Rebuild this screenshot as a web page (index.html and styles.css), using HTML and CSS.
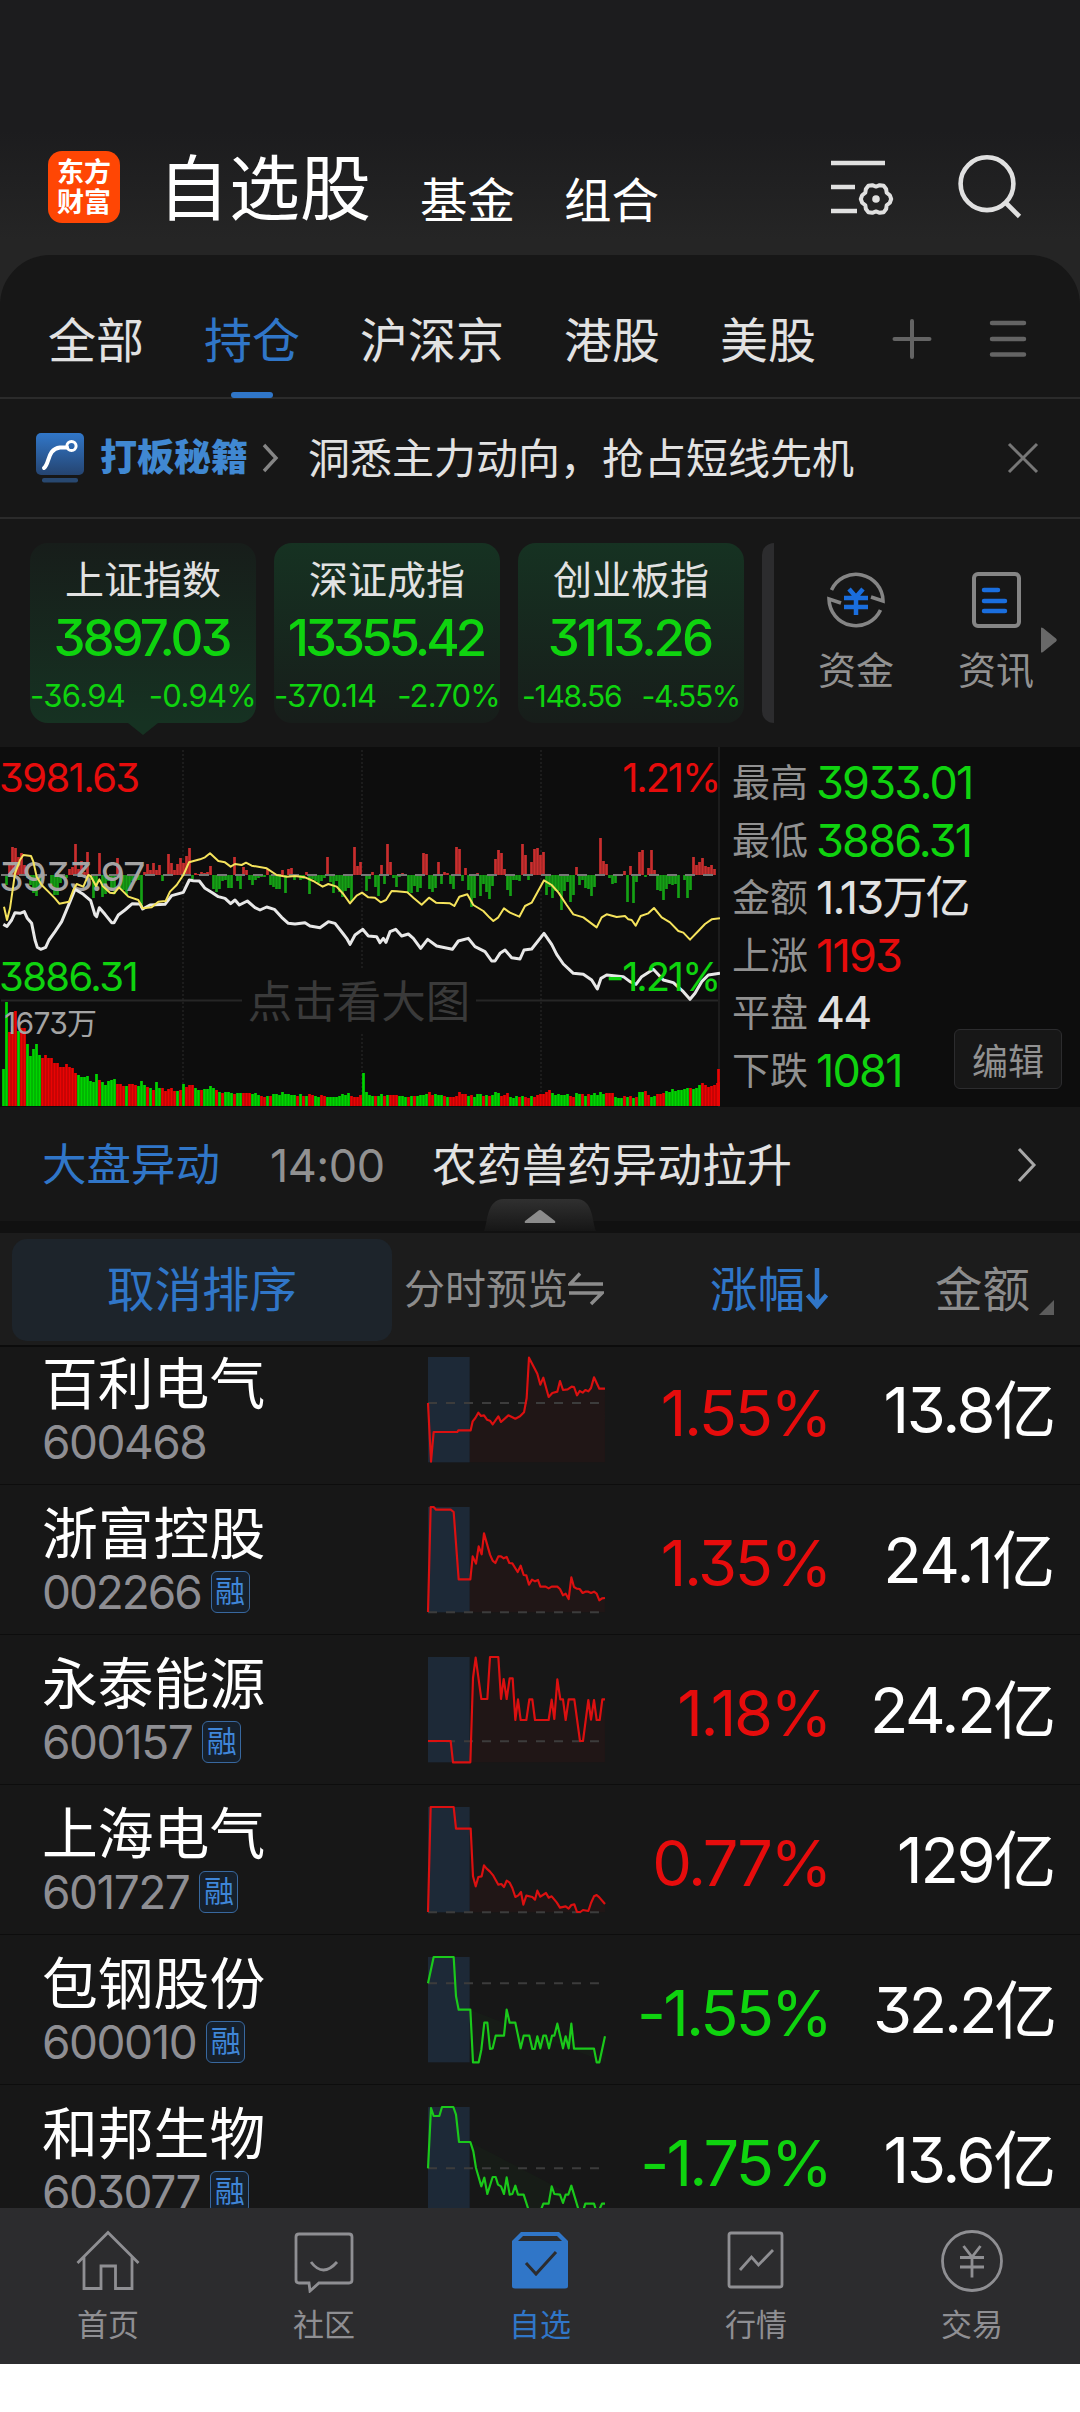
FILE: index.html
```html
<!DOCTYPE html>
<html lang="zh-CN">
<head>
<meta charset="utf-8">
<title>自选股</title>
<link rel="stylesheet" href="styles.css">
</head>
<body>
<div class="app">
  <header class="top">
    <div class="logo"><span>东方</span><span>财富</span></div>
    <h1 class="title">自选股</h1>
    <span class="top-link">基金</span>
    <span class="top-link">组合</span>
    <svg class="ic-settings" width="68" height="90" viewBox="0 0 68 90" fill="none" stroke="#e0e0e0" stroke-width="4.4"><path d="M3 23h54M3 47h24M3 71h26"/><path stroke-width="4" stroke-linejoin="round" d="M63.200 59L61.800 62.700 58.700 65.200 58.100 69.100 55.600 72.200 51.700 72.800 48 71.400 44.300 72.800 40.400 72.200 37.900 69.100 37.300 65.200 34.200 62.700 32.800 59 34.200 55.300 37.300 52.800 37.900 48.900 40.400 45.800 44.300 45.200 48 46.600 51.700 45.200 55.600 45.800 58.100 48.900 58.700 52.800 61.800 55.300Z"/><circle cx="48" cy="59" r="3.8" fill="#e0e0e0" stroke="none"/></svg>
    <svg class="ic-search" width="68" height="90" viewBox="0 0 68 90" fill="none" stroke="#e0e0e0" stroke-width="4.6"><circle cx="31" cy="43.7" r="26.4"/><path d="M50 63l13.5 13.5"/></svg>
  </header>

  <main class="panel">
    <nav class="tabs">
      <span class="tab">全部</span><span class="tab active">持仓</span><span class="tab">沪深京</span><span class="tab">港股</span><span class="tab">美股</span>
      <svg class="ic-plus" width="40" height="40" viewBox="0 0 40 40" stroke="#646464" stroke-width="4" stroke-linecap="round"><path d="M2.500 20h35M20 2v36"/></svg>
      <svg class="ic-menu" width="38" height="40" viewBox="0 0 38 40" stroke="#646464" stroke-width="4.500" stroke-linecap="round"><path d="M3 4h32M3 20h32M3 35.500h32"/></svg>
    </nav>

    <section class="banner">
      <svg width="50" height="52" viewBox="0 0 50 52"><defs><linearGradient id="bl" x2="0" y2="1"><stop stop-color="#3177c9"/><stop offset="1" stop-color="#254470"/></linearGradient></defs><rect x="1" y="1" width="48" height="42" rx="5" fill="url(#bl)"/><rect x="7" y="46" width="36" height="4.500" rx="2" fill="#284870"/><path d="M9 36C15 31 12 17 25 15.500h7" fill="none" stroke="#fff" stroke-width="4" stroke-linecap="round"/><circle cx="36.500" cy="14" r="4.600" fill="none" stroke="#fff" stroke-width="3"/></svg>
      <strong class="banner-tag">打板秘籍</strong>
      <svg class="banner-arrow" width="18" height="30" viewBox="0 0 18 30" fill="none" stroke="#858585" stroke-width="3.400"><path d="M3 2l12 13L3 28"/></svg>
      <span class="banner-text">洞悉主力动向，抢占短线先机</span>
      <svg class="banner-close" width="32" height="32" viewBox="0 0 32 32" fill="none" stroke="#777" stroke-width="3"><path d="M2 2l28 28M30 2L2 30"/></svg>
    </section>

    <section class="indices">
      <div class="card current"><span class="c-name">上证指数</span><span class="c-val">3897.03</span><div class="c-chg"><span>-36.94</span><span>-0.94%</span></div></div>
      <div class="card second"><span class="c-name">深证成指</span><span class="c-val">13355.42</span><div class="c-chg"><span>-370.14</span><span>-2.70%</span></div></div>
      <div class="card third"><span class="c-name">创业板指</span><span class="c-val">3113.26</span><div class="c-chg"><span>-148.56</span><span>-4.55%</span></div></div>
      <div class="sliver"></div>
      <div class="tool fund">
        <svg width="64" height="64" viewBox="0 0 64 64" fill="none" stroke="#858585" stroke-width="3.600"><path d="M7.500 22A27 27 0 0 1 59 33l-12-4M56.500 42A27 27 0 0 1 5 31l12 4"/><path stroke="#1a6ede" stroke-width="4.500" d="M25 21l7 8 7-8M20 30h24M20 39h24M32 29v18"/></svg>
        <span>资金</span>
      </div>
      <div class="tool news">
        <svg width="64" height="64" viewBox="0 0 64 64" fill="none"><rect x="10" y="6" width="45" height="52" rx="4" stroke="#858585" stroke-width="4"/><path stroke="#1a6ede" stroke-width="4.500" stroke-linecap="round" d="M20 22h14M20 33h21M20 43h21"/></svg>
        <span>资讯</span>
      </div>
      <svg class="more" width="16" height="26" viewBox="0 0 16 26"><path d="M0 1Q0 0 2 1L15 11.500Q16.500 13 15 14.500L2 25Q0 26 0 25Z" fill="#686868"/></svg>
    </section>

    <section class="market">
      <div class="chart">
        <svg width="720" height="360" viewBox="0 0 720 360">
          <g stroke="#222" stroke-width="1.500" stroke-dasharray="2 2"><path d="M183 3v356M362 3v356M541 3v356"/></g>
          <path d="M1 253.500h241M476 253.500h244" stroke="#262626" stroke-width="2"/>
          <path d="M719 0v360" stroke="#1c1c1c" stroke-width="2"/>
          <g id="flow"></g>
          <path d="M1 128h719" stroke="#777" stroke-width="2" stroke-dasharray="10 8"/>
          <g id="volume"></g>
        </svg>
        <div class="lab hi">3981.63</div><div class="lab hi-p">1.21%</div>
        <div class="lab mid">3933.97</div>
        <div class="lab lo">3886.31</div>
        <div class="lab vol">1673万</div>
        <div class="lab mark">点击看大图</div>
        <svg class="lines" width="720" height="360" viewBox="0 0 2160 1080" fill="none" stroke-linejoin="round"><g transform="translate(0 249)">
          <polyline stroke="#e8e8e8" stroke-width="9" points="10,283 21,289 35,270 45,248 60,250 73,245 82,265 95,280 105,330 112,352 122,358 137,352 147,330 165,305 185,275 210,215 225,178 250,193 272,212 285,255 290,260 298,233 315,253 335,278 342,278 355,255 375,240 397,221 420,222 428,237 450,225 495,223 515,197 550,187 568,150 580,152 598,153 615,175 637,188 655,200 675,205 692,221 705,210 718,225 742,213 765,233 780,240 800,231 823,238 845,262 865,280 885,282 915,278 930,288 960,293 985,275 1005,280 1030,312 1040,325 1050,343 1065,315 1088,298 1105,318 1130,320 1140,338 1150,325 1158,337 1170,305 1187,298 1205,318 1225,312 1240,325 1262,355 1283,328 1310,348 1357,358 1375,333 1405,325 1425,350 1455,365 1475,393 1485,393 1500,370 1515,360 1535,383 1560,387 1572,360 1595,357 1632,310 1655,343 1670,373 1690,402 1720,430 1750,433 1775,450 1792,477 1803,445 1820,435 1870,440 1890,455 1908,463 1925,440 1960,418 1990,450 2020,458 2050,485 2070,508 2085,490 2105,455 2125,435 2160,430"/>
          <polyline stroke="#f5e35c" stroke-width="6" points="12,230 21,270 30,235 45,130 60,90 70,75 93,78 100,95 110,140 125,165 145,185 165,205 178,221 207,215 220,180 230,162 250,170 265,135 272,138 288,168 298,148 308,168 330,188 342,190 357,172 370,185 385,200 415,210 428,235 455,232 475,215 497,213 510,185 530,165 550,135 567,97 600,88 615,82 630,70 655,93 675,97 692,110 705,102 725,105 738,98 755,107 800,115 830,135 860,140 885,138 915,142 940,153 968,170 985,162 1010,170 1030,192 1050,220 1070,197 1086,188 1105,202 1125,203 1142,217 1158,210 1175,183 1190,184 1222,187 1240,203 1265,224 1287,203 1308,218 1350,220 1363,228 1378,200 1402,193 1420,225 1450,243 1468,262 1480,273 1495,262 1512,235 1530,248 1558,260 1575,228 1595,218 1632,151 1655,165 1675,187 1700,225 1720,253 1750,262 1790,292 1805,262 1820,253 1850,261 1875,258 1885,268 1895,270 1907,287 1922,258 1945,250 1962,234 1985,262 2010,277 2035,303 2050,308 2070,329 2095,303 2115,282 2135,268 2160,265"/>
        </g></svg>
        <div class="lab lo-p">-1.21%</div>
      </div>
      <div class="stats">
        <dl>
          <div><dt>最高</dt><dd class="down">3933.01</dd></div>
          <div><dt>最低</dt><dd class="down">3886.31</dd></div>
          <div><dt>金额</dt><dd>1.13万亿</dd></div>
          <div><dt>上涨</dt><dd class="up">1193</dd></div>
          <div><dt>平盘</dt><dd>44</dd></div>
          <div><dt>下跌</dt><dd class="down">1081</dd></div>
        </dl>
        <button class="edit">编辑</button>
      </div>
    </section>

    <section class="alert">
      <span class="a-tag">大盘异动</span><span class="a-time">14:00</span><span class="a-text">农药兽药异动拉升</span>
      <svg class="a-arrow" width="20" height="36" viewBox="0 0 20 36" fill="none" stroke="#a8a8a8" stroke-width="3"><path d="M2 2l15 16L2 34"/></svg>
      <svg class="fold" width="112" height="32" viewBox="0 0 112 32"><defs><linearGradient id="fd" x2="0" y2="1"><stop stop-color="#303030"/><stop offset="1" stop-color="#161616"/></linearGradient></defs><path d="M0 32C4 24 2 0 20 0h72c18 0 16 24 20 32z" fill="url(#fd)"/><path d="M54 12q2-2 4 0l13 10q1 2-1 2H42q-2 0-1-2z" fill="#8c8c8c"/></svg>
    </section>
    <div class="gap"></div>

    <section class="cols">
      <span class="unsort">取消排序</span>
      <span class="col-preview">分时预览<svg width="36" height="34" viewBox="0 0 36 34" fill="none" stroke="#8c8c8c" stroke-width="3.400"><path d="M12 1.500L2 12h33M1 21h33L23 32"/></svg></span>
      <span class="col-rise">涨幅<svg width="24" height="42" viewBox="0 0 24 42" fill="none" stroke="#3076c8" stroke-width="4.500"><path d="M12 0v37M2.500 27L12 38l9.500-11"/></svg></span>
      <span class="col-amt">金额</span>
      <svg class="corner" width="16" height="16" viewBox="0 0 16 16"><path d="M15 0v15H0z" fill="#5c5c5c"/></svg>
    </section>

    <section class="list">
      <article class="row">
        <div class="who"><b>百利电气</b><p><span class="code">600468</span></p></div>
        <svg class="spark red" viewBox="84 52 531 316"><rect x="84" y="52" width="125" height="316"/><path class="fill" d="M209 368V272L218 245 226 235 235 219 243 229 252 227 261 240 270 243 278 254 295 230 303 247 325 227 346 237 360 230 372 218 380 175 387 54 412 102 421 135 430 114 446 172 457 160 472 156 480 124 489 151 520 141 531 167 539 154 565 155 573 145 582 113 598 147 615 147V368Z"/><path class="base" d="M84 190H615"/><polyline points="84,190 93,366 101,277 172,277 175,272 212,272 218,245 226,235 235,219 243,229 252,227 261,240 270,243 278,254 295,230 303,247 325,227 346,237 360,230 372,218 380,175 387,54 412,102 421,135 430,114 446,172 457,160 472,156 480,124 489,151 503,149 515,141 522,142 531,167 539,154 548,159 556,151 565,155 573,145 582,113 598,147 615,147"/></svg>
        <span class="pct up">1.55%</span><span class="amt wide">13.8亿</span>
      </article>
      <article class="row">
        <div class="who"><b>浙富控股</b><p><span class="code tight">002266</span><i>融</i></p></div>
        <svg class="spark red" viewBox="84 502 531 316"><rect x="84" y="502" width="125" height="316"/><path class="fill" d="M209 818V719L218 650 228 672 236 620 245 644 252 581 270 645 286 670 295 650 320 653 353 697 362 678 371 706 387 735 414 721 421 741 476 741 489 767 506 778 514 713 522 742 548 760 590 760 598 782 615 775V818Z"/><path class="base" d="M84 818H615"/><polyline points="84,817 92,502 101,502 108,510 152,510 161,517 176,719 211,719 218,650 228,672 236,620 245,644 252,581 270,645 278,663 286,670 295,650 303,650 311,656 320,652 328,670 337,671 353,697 362,678 371,706 379,707 387,735 396,720 405,725 414,721 421,741 437,741 446,746 455,741 472,741 480,748 489,767 497,762 506,778 514,713 522,742 530,747 539,748 548,760 556,756 565,756 573,760 582,756 590,762 598,782 606,776 615,775"/></svg>
        <span class="pct up">1.35%</span><span class="amt wider">24.1亿</span>
      </article>
      <article class="row">
        <div class="who"><b>永泰能源</b><p><span class="code">600157</span><i>融</i></p></div>
        <svg class="spark red" viewBox="84 952 531 316"><rect x="84" y="952" width="125" height="316"/><path class="fill" d="M211 1268L219 1015 227 954 244 1078 262 1078 270 952 295 952 303 1078 311 1018 320 1078 329 1016 338 1016 346 1141 354 1079 362 1141 379 1141 388 1079 397 1079 405 1141 446 1141 455 1080 463 1138 472 1019 481 1079 489 1079 497 1141 506 1079 523 1079 540 1204 549 1204 565 1081 573 1140 582 1081 590 1141 599 1141 607 1079 615 1079V1268Z"/><path class="base" d="M84 1205H615"/><polyline points="84,1204 152,1204 159,1268 211,1268 219,1015 227,954 244,1078 262,1078 270,952 295,952 303,1078 311,1018 320,1078 329,1016 338,1016 346,1141 354,1079 362,1141 379,1141 388,1079 397,1079 405,1141 446,1141 455,1080 463,1138 472,1019 481,1079 489,1079 497,1141 506,1079 523,1079 540,1204 549,1204 565,1081 573,1140 582,1081 590,1141 599,1141 607,1079 615,1079"/></svg>
        <span class="pct up">1.18%</span><span class="amt">24.2亿</span>
      </article>
      <article class="row">
        <div class="who"><b>上海电气</b><p><span class="code">601727</span><i>融</i></p></div>
        <svg class="spark red" viewBox="84 82 531 316"><rect x="84" y="82" width="125" height="316"/><path class="fill" d="M209 398V147L219 290 227 320 235 292 245 288 252 257 270 276 295 315 312 320 320 303 337 325 346 352 363 337 370 375 379 348 405 360 412 333 421 351 438 340 480 384 506 386 523 374 531 397 565 393 582 350 590 346 615 373V398Z"/><path class="base" d="M84 398H615"/><polyline points="84,397 92,82 161,82 168,147 212,147 219,290 227,320 235,292 245,290 252,257 260,267 270,276 280,288 295,315 304,313 312,322 320,303 329,309 337,325 346,352 355,347 363,337 370,375 379,348 397,352 405,360 412,333 421,351 438,340 446,354 455,350 470,368 480,384 497,380 506,387 514,376 523,374 531,397 541,397 549,391 565,394 573,370 582,350 590,346 598,353 615,373"/></svg>
        <span class="pct up">0.77%</span><span class="amt">129亿</span>
      </article>
      <article class="row">
        <div class="who"><b>包钢股份</b><p><span class="code">600010</span><i>融</i></p></div>
        <svg class="spark green" viewBox="84 532 531 316"><rect x="84" y="532" width="125" height="316"/><path class="fill" d="M211 690L219 848 236 848 244 805 253 729 262 729 270 808 278 805 287 768 312 768 320 690 329 729 346 729 362 805 371 768 388 768 397 808 446 805 472 732 489 805 514 732 522 807 582 807 590 848 598 848 615 770V848Z"/><path class="base" d="M84 611H615"/><polyline points="84,611 101,532 161,532 168,650 176,690 211,690 219,848 236,848 244,810 253,729 262,729 270,808 278,806 287,768 312,768 320,690 329,729 346,729 362,806 371,768 388,768 397,808 404,808 412,770 421,806 430,768 438,768 447,806 456,768 463,768 472,732 489,806 497,770 506,806 514,732 522,807 582,807 590,848 598,848 615,770"/></svg>
        <span class="pct down">-1.55%</span><span class="amt narrow">32.2亿</span>
      </article>
      <article class="row">
        <div class="who"><b>和邦生物</b><p><span class="code">603077</span><i>融</i></p></div>
        <svg class="spark green" viewBox="84 982 531 316"><rect x="84" y="982" width="125" height="316"/><path class="fill" d="M211 1087L228 1165 244 1220 253 1194 262 1243 280 1192 296 1215 312 1243 320 1193 329 1245 346 1218 354 1245 371 1245 388 1298 420 1298 430 1272 446 1272 455 1220 472 1245 489 1270 514 1218 538 1298 556 1272 615 1272V1298Z"/><path class="base" d="M84 1166H615"/><polyline points="84,1166 93,985 101,1009 118,1009 126,982 160,982 168,1005 177,1087 211,1087 220,1115 228,1165 244,1220 253,1194 262,1243 278,1192 287,1192 294,1215 303,1220 312,1243 320,1193 329,1245 337,1243 346,1218 354,1245 371,1245 388,1298 420,1298 430,1272 446,1272 455,1220 463,1243 480,1245 489,1270 497,1245 505,1245 514,1218 538,1298 548,1298 556,1272 582,1272 590,1298 598,1290 606,1272 615,1272"/></svg>
        <span class="pct down">-1.75%</span><span class="amt wide">13.6亿</span>
      </article>
    </section>
  </main>

  <nav class="bottom">
    <a><svg viewBox="0 0 64 64"><path d="M1.500 34L32 3.500 62.500 34M8 28v31.500h17V37h14.500v22.500H56V28"/></svg>首页</a>
    <a><svg viewBox="0 0 64 64"><path d="M7 5h50q3 0 3 3v43q0 3-3 3H27L18 62 17 54H7q-3 0-3-3V8q0-3 3-3zM19 33q12 16 26 0"/></svg>社区</a>
    <a class="on"><svg viewBox="0 0 64 64"><path class="solid" d="M13 3h38l9 9v45q0 2.500-3 2.500H7q-3 0-3-2.500V12z"/><path class="cut" d="M10 12l5-5h34l5 5z"/><path class="tick" d="M18 34l10 11 20-22"/></svg>自选</a>
    <a><svg viewBox="0 0 64 64"><path d="M7 4h49q2 0 2 2v50q0 2-2 2H7q-2 0-2-2V6q0-2 2-2zM16 41l11.500-13 7 8L49 21"/></svg>行情</a>
    <a><svg viewBox="0 0 64 64"><circle cx="32" cy="32" r="29.500"/><path d="M23.500 17L32 28l8.500-11M20 28.500h24M20 38h24M32 28v20.500"/></svg>交易</a>
  </nav>
</div>
<script src="chart.js"></script>
</body>
</html>
```
FILE: styles.css
```css
* { box-sizing: border-box; margin: 0; padding: 0; }
body {
  width: 1080px; height: 2412px; background: #fff; color: #e2e2e2; overflow: hidden;
  font-family: Inter, "Noto Sans CJK SC", sans-serif;
  font-feature-settings: "cv09" 1; white-space: nowrap; font-weight: 400;
}
svg { display: block; flex: none; }
.up { color: #e60c0c; }
.down { color: #0fd30f; }
.app { height: 2364px; background: linear-gradient(#1c1c1e 0, #1c1c1e 130px, #252525 240px); display: flex; flex-direction: column; overflow: hidden; }

.top { height: 255px; padding: 151px 0 0 48px; display: flex; align-items: flex-start; flex: none; }
.logo { width: 72px; height: 72px; border-radius: 14px; background: #ff4604; color: #fff; display: flex; flex-direction: column; align-items: center; padding-top: 5px; font: 700 27px/30px "Noto Sans CJK SC", sans-serif; }
.title { font-size: 71px; font-weight: 400; line-height: 74px; color: #fff; margin-left: 38px; width: 262px; }
.top-link { font-size: 47.500px; line-height: 99px; color: #fff; width: 144px; }
.ic-settings { margin: -11px 0 0 120px; }
.ic-search { margin: -11px 0 0 60px; }

.panel { background: #171717; border-radius: 50px 50px 0 0; height: 1953px; flex: none; overflow: hidden; }
.tabs { height: 144px; border-bottom: 2px solid #2b2b2b; display: flex; padding-left: 48px; align-items: flex-start; }
.tab { font-size: 48px; line-height: 72px; padding-top: 50px; height: 143px; margin-right: 60px; position: relative; }
.active { color: #3076c8; }
.active::after { content: ""; position: absolute; left: 50%; bottom: 0; width: 42px; height: 6px; margin-left: -21px; border-radius: 3px; background: #3076c8; }
.ic-plus { margin: 64px 0 0 16px; }
.ic-menu { margin: 64px 0 0 57px; }

.banner { height: 120px; border-bottom: 2px solid #2b2b2b; display: flex; align-items: center; padding-left: 35px; }
.banner-tag { font-size: 37px; font-weight: 900; color: #4088d2; margin-left: 15px; width: 150px; line-height: 60px; }
.banner-arrow { margin-left: 11px; }
.banner-text { font-size: 42px; line-height: 60px; margin: 2px 0 0 29px; width: 548px; }
.banner-close { margin-left: 151px; }

.indices { height: 228px; display: flex; padding: 24px 0 0 30px; }
.card { width: 226px; height: 180px; margin-right: 18px; border-radius: 18px; background: linear-gradient(#163222, #171d1a); display: flex; flex-direction: column; align-items: center; position: relative; color: #0fd30f; }
.current { background: linear-gradient(#171d1a, #163222); }
.current::after { content: ""; position: absolute; top: 180px; left: 98px; border: 15px solid transparent; border-top: 12px solid #163222; border-bottom: 0; }
.c-name { font-size: 39px; line-height: 50px; margin-top: 12px; color: #e2e2e2; }
.c-val { font-size: 51px; line-height: 60px; font-weight: 500; margin-top: 3px; letter-spacing: -3px; margin-left: -3px; }
.second .c-val { letter-spacing: -4px; }
.third .c-val { letter-spacing: -3px; }
.c-chg { font-size: 31px; line-height: 40px; width: 226px; display: flex; justify-content: space-between; margin-top: 8px; letter-spacing: -0.700px; }
.second .c-chg { letter-spacing: -0.800px; }
.third .c-chg { font-size: 30px; padding: 0 4px; letter-spacing: -1.300px; }
.sliver { width: 12px; height: 180px; background: #2c2c2e; border-radius: 14px 0 0 14px; }
.tool { width: 100px; display: flex; flex-direction: column; align-items: center; font-size: 38px; line-height: 50px; color: #919191; padding-top: 25px; }
.tool span { margin-top: 13px; }
.fund { margin-left: 32px; }
.news { margin-left: 40px; }
.more { margin: 84px 0 0 -5px; }

.market { height: 360px; background: #0d0d0d; display: flex; }
.chart { width: 720px; position: relative; }
.lines, .lab { position: absolute; left: 0; top: 0; }
.lab { font-size: 40px; line-height: 48px; letter-spacing: -1.600px; }
.hi { left: -1px; top: 7px; color: #e60c0c; }
.hi-p { left: auto; right: 1px; top: 7px; color: #e60c0c; letter-spacing: -2.200px; }
.mid { left: -1px; top: 106px; color: #a4a4a4; }
.lo { left: -1px; top: 206px; color: #0fd30f; }
.lo-p { left: auto; right: 1px; top: 206px; color: #0fd30f; letter-spacing: -2.200px; }
.vol { left: 4px; top: 252px; font-size: 30px; letter-spacing: -0.700px; color: #a4a4a4; }
.mark { left: 242px; top: 223px; width: 234px; text-align: center; font-size: 44.500px; line-height: 64px; color: #3a3a3a; letter-spacing: 0; background: #0d0d0d; }
.stats { width: 360px; padding: 7px 0 0 12px; position: relative; }
.stats dl div { display: flex; height: 57.600px; line-height: 57.600px; }
dt { font-size: 38px; width: 84px; color: #919191; }
dd { font-size: 45px; letter-spacing: -1.800px; }
.edit { position: absolute; left: 234px; top: 282px; width: 108px; height: 60px; border: 1px solid #2c2c2e; border-radius: 6px; background: #171717; color: #919191; font: 400 36px/56px "Noto Sans CJK SC", sans-serif; }

.alert { height: 114px; display: flex; padding-left: 42px; font-size: 45px; line-height: 117px; position: relative; }
.a-tag { color: #3076c8; width: 228px; font-size: 44.500px; }
.a-time { color: #919191; width: 162px; letter-spacing: -0.500px; }
.a-text { width: 585px; }
.a-arrow { margin-top: 40px; }
.fold { position: absolute; left: 484px; top: 92px; z-index: 1; }
.gap { height: 12px; background: #111; }

.cols { height: 114px; background: #1c1c1c; border-bottom: 2px solid #0c0c0c; display: flex; padding: 6px 0 0 12px; font-size: 47.500px; line-height: 101px; color: #8c8c8c; }
.unsort { width: 380px; height: 102px; border-radius: 15px; background: #1d242b; color: #3076c8; text-align: center; }
.col-preview { font-size: 41px; line-height: 98px; height: 100px; width: 199px; margin-left: 12px; display: flex; align-items: center; }
.col-rise { margin-left: 107px; width: 119px; height: 100px; color: #3076c8; display: flex; align-items: center; }
.col-amt { margin-left: 106px; }
.corner { margin: 61px 0 0 9px; }

.list { height: 861px; overflow: hidden; }
.row { height: 150px; border-bottom: 1.500px solid #0d0d0d; display: flex; color: #fff; }
.row:first-child { margin-top: -12px; }
.who { width: 384px; padding: 18px 0 0 42px; }
.who b { display: block; font-weight: 400; font-size: 55.800px; line-height: 62px; }
.who p { display: flex; align-items: center; font-size: 46px; line-height: 54px; height: 54px; color: #8e8e93; }
.code { letter-spacing: -1.500px; }
.tight { letter-spacing: -2.100px; }
.who i { margin-left: 10px; width: 39px; height: 42px; border: 1.500px solid #38689f; border-radius: 6px; background: #16202c; color: #3f86d8; font-style: normal; font-size: 30px; line-height: 38px; display: flex; justify-content: center; }
.spark { width: 177px; height: 105.330px; margin: 22px 0 0 44px; overflow: visible; }
.spark rect { fill: #1d2937; }
.spark polyline { fill: none; stroke-width: 6.500; stroke-linejoin: round; }
.spark .base { stroke: #3c3c3c; stroke-width: 6; stroke-dasharray: 27 27; }
.red polyline { stroke: #dc1010; }
.green polyline { stroke: #1bc91b; }
.red .fill { fill: #dc1010; opacity: .05; }
.green .fill { fill: #1bc91b; opacity: .03; }
.pct { width: 225px; text-align: right; font-size: 63px; line-height: 156px; letter-spacing: -2.400px; }
.pct.down { letter-spacing: -2.900px; }
.amt { width: 224px; text-align: right; font-size: 63px; line-height: 151px; letter-spacing: -2.300px; }
.wide { letter-spacing: -2.300px; }
.wider { letter-spacing: -1.300px; }
.narrow { letter-spacing: -3.200px; }

.bottom { height: 156px; background: #2c2c2e; display: flex; flex: none; }
.bottom a { width: 216px; display: flex; flex-direction: column; align-items: center; padding-top: 21px; font-size: 31px; line-height: 44px; color: #8f8f93; }
.bottom svg { width: 64px; height: 64px; margin-bottom: 10px; fill: none; stroke: #8f8f93; stroke-width: 2.800; }
.bottom .on { color: #3076c8; }
.on .solid { fill: #3076c8; stroke: none; }
.on .cut { fill: #2c2c2e; stroke: none; }
.on .tick { stroke: #2c2c2e; stroke-width: 3; }
```
FILE: chart.js
```js
// Net flow per minute: [bar index, signed height]
const flow = [1,-10,2,13,3,28,4,27,5,18,6,22,7,10,8,-3,9,-10,10,-18,11,-21,12,-13,13,-8,16,-10,17,-20,18,-20,19,-8,21,-3,22,6,23,8,24,31,25,6,26,14,27,3,28,23,29,-5,30,-23,31,-15,32,22,33,-22,34,-19,35,-6,36,-15,37,-19,38,17,39,-14,40,-15,41,-20,42,-16,43,-6,44,-6,45,-5,46,-33,47,3,48,11,49,5,50,12,51,5,52,10,53,-6,55,21,56,12,57,5,58,11,59,17,60,12,61,19,62,27,63,-4,64,2,65,1,66,3,67,2,68,3,69,9,70,-14,71,-17,72,-14,73,-6,74,-5,75,-13,76,-13,77,18,78,-6,79,-14,80,8,81,5,82,-5,83,-10,84,-5,85,-3,86,-2,87,-2,88,6,89,-10,90,-12,91,-14,92,-14,93,5,94,-18,95,6,96,7,97,-5,98,-2,99,-5,100,-4,101,3,102,-19,103,-4,104,-6,105,-8,106,-6,107,-3,108,18,109,-7,110,-18,111,-6,112,-17,113,-22,114,-16,115,-13,116,-26,117,28,118,9,119,13,121,-16,122,-4,123,3,124,-12,125,-21,126,10,127,-9,128,31,129,13,130,-3,131,-12,132,-2,133,2,135,-17,136,-18,137,-11,138,-17,139,-13,140,22,141,21,142,-14,143,-17,144,-13,145,13,146,-9,147,3,148,2,149,-9,150,-14,151,28,152,26,153,-6,154,7,155,-15,156,-32,157,-23,158,2,159,-21,160,-9,161,-17,162,-24,163,-11,164,16,165,25,166,22,167,6,168,-15,169,-21,170,-5,171,-5,172,-6,173,31,174,20,175,-5,176,13,177,26,178,27,179,20,180,23,181,-20,182,-12,183,-23,184,-16,185,-16,186,-35,187,-16,188,-7,189,-27,190,-20,191,8,192,-10,193,-5,194,-13,195,-14,196,-21,197,-12,199,37,200,14,201,11,202,-3,203,-9,204,-8,207,4,208,-27,209,9,210,-28,211,-7,212,23,213,25,214,-2,215,7,216,25,217,5,218,-15,219,-16,220,-25,221,-14,222,-9,223,-10,224,-9,225,-23,227,-5,228,-23,229,-15,230,18,231,10,232,13,233,17,234,9,235,8,236,10,237,6];
// Volume per minute: colour letter followed by the heights of that run
const volume = "g37,104 r74,80,95 g75 r78,78 g62,50,57,62,51 r48,51,48,48,43,43,39,39,42,39,38,33 g31,29,29,30,25,24,32 r26 g24,21,25,26,27 r22,22,20 g20 r22,22,21 g20,25,21 r19 g18 r16 g24,18 r18,15,17,18,15 g15 r16 g22 r19,21,21 g18,16 r16 g17,17,20,18 r16 g14 r13 g14,14,13 r12 g13,13 r13,13,13 g12,13,11 r10,9 g10 r10 g12,12,11,14,12,12,11,11 r10 g12 r10 g10 r12,11 g10,9 r11,10 g9,9,9,9,10,12,11,13 r10,9,9,11 g33,14,11,10 r10 g10,12 r10 g11 r11,11,11 g10,10,9 r9 g10 r10 g10,11,11,12 r14,11 g12,11,11 r10 g9 r9,9,10,14,12,12 g10 r11 g9,12,12 r10 g11 r10 g11,14,13 r10,11,13 g9,8,10 r9 g10 r9,8 g10 r9,11,12,12,14,16 g13,11,12,11,11,12 r10,9 g13,12 r12 g10 r12 g11,13,11,14,12 r13,13,13 g9,8,8 r10 g9 r10 g8 r9 g14,14 r15,11 g9,10 r12,12,13 g15,14,17,15,16,16,17,18 r18 g17,18,21 r23,21,19,20,21,23,24,27,3";
const RED = { flow: "#c92e2e", vol: "#ea0303" }, GREEN = { flow: "#15a015", vol: "#00d500" };

const bars = { fr: "", fg: "", vr: "", vg: "" };
for (let i = 0; i < flow.length; i += 2) {
  bars[flow[i + 1] > 0 ? "fr" : "fg"] += `M${3.5 + flow[i] * 3} 128v${-flow[i + 1]}`;
}
let n = 0;
for (const run of volume.split(" ")) {
  for (const h of run.slice(1).split(",")) {
    bars["v" + run[0]] += `M${3.5 + n++ * 3} 359v${-h}`;
  }
}
bars.vr += "M718.5 359v-37";
const path = (d, c) => `<path d="${d}" stroke="${c}" stroke-width="2.7"/>`;
document.getElementById("flow").innerHTML = path(bars.fr, RED.flow) + path(bars.fg, GREEN.flow);
document.getElementById("volume").innerHTML = path(bars.vr, RED.vol) + path(bars.vg, GREEN.vol);
```
